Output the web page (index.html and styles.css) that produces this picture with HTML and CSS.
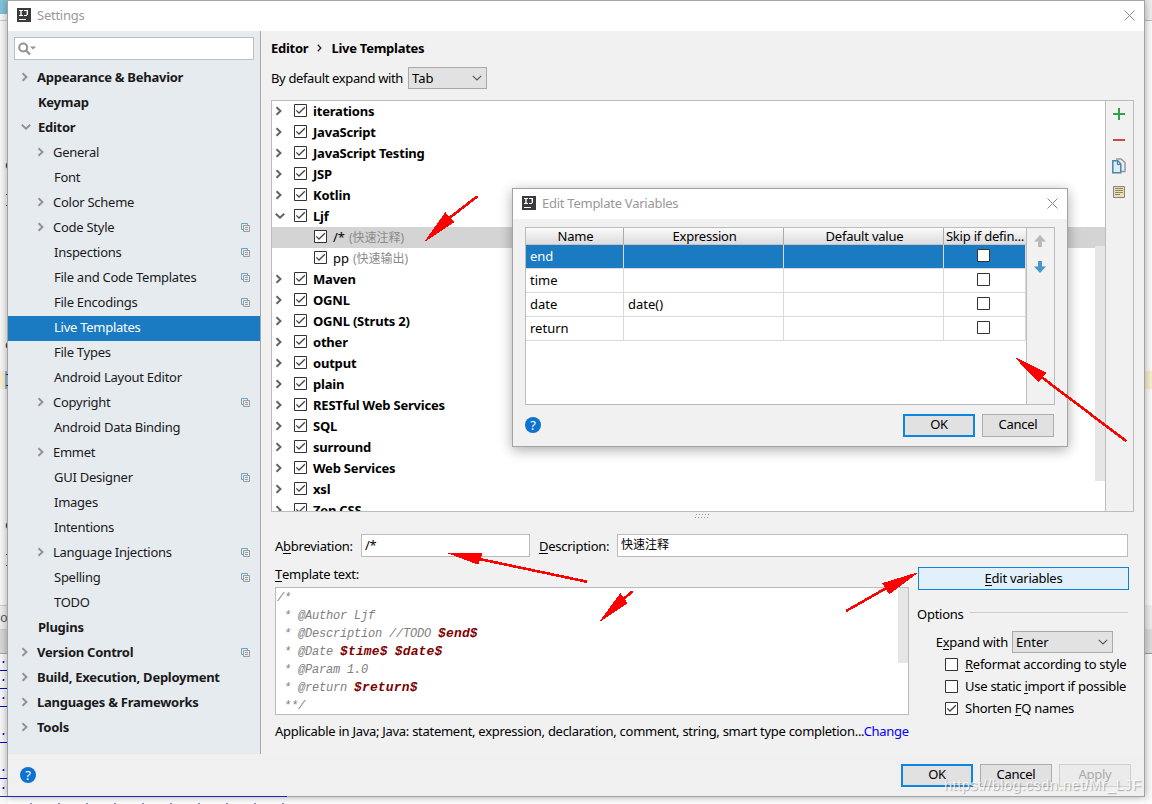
FILE: index.html
```html
<!DOCTYPE html>
<html lang="en">
<head>
<meta charset="utf-8">
<title>Settings</title>
<link rel="stylesheet" href="styles.css">
</head>
<body>
<svg class="defs" width="0" height="0">
  <symbol id="right" viewBox="0 0 8 10"><path d="M1.5 1.2 5.5 5 1.5 8.8" fill="none" stroke="currentColor" stroke-width="1.9"/></symbol>
  <symbol id="down" viewBox="0 0 10 8"><path d="M.8 1.8 5 5.8 9.2 1.8" fill="none" stroke="currentColor" stroke-width="1.9"/></symbol>
  <symbol id="box" viewBox="0 0 13 13"><path d="M.5.5h12v12H.5z" fill="#fff" stroke="#333"/></symbol>
  <symbol id="checked" viewBox="0 0 13 13"><path d="M.5.5h12v12H.5z" fill="#fff" stroke="#333"/><path d="M2.3 6.4 5 9 10.9 3.2" fill="none" stroke="#444" stroke-width="1.3"/></symbol>
  <symbol id="copy" viewBox="0 0 9 9"><path d="M2 6.5H.5v-6h6V2" fill="none" stroke="#6da3c1"/><path d="M2.5 2.5h6v6h-6zM4 4.5h3M4 6.5h3" fill="none" stroke="#9b9b9b"/></symbol>
  <symbol id="close" viewBox="0 0 11 11"><path d="M.5.5l10 10M10.500.5l-10 10" fill="none" stroke="#8a8a8a"/></symbol>
  <symbol id="ij" viewBox="0 0 14 14"><path d="M0 0h14v14H0z" fill="#3b3b3b"/><path d="M2 2.500h4M2 7.500h4M7 2.500h4M7 7.500h3" fill="none" stroke="#fff"/><path d="M4 2v6M10.300 2v5" fill="none" stroke="#fff" stroke-width="1.400"/><path d="M2 11.500h7" stroke="#fff"/></symbol>
  <symbol id="combo" viewBox="0 0 10 6"><path d="M.8.8 5 5 9.200.8" fill="none" stroke="#555" stroke-width="1.100"/></symbol>
</svg>

<div class="behind">
  <div class="left-edge">
    <span class="edge-tab"></span><span class="edge-fade"></span>
    <b class="t1">o</b><b class="t2">}</b><b class="t3">o</b><i class="caret-line"></i><b class="t4">}</b><b class="t5">o</b><b class="t6">}</b>
    <span class="edge-bar">o</span><i class="edge-tool"></i>
    <i class="lk l1">.</i><i class="lk l2">.</i><i class="lk l3">.</i><i class="lk l4">.</i><i class="lk l5">.</i><i class="lk l6">.</i>
  </div>
  <div class="right-edge"><i class="r1"></i><i class="r2"></i><i class="r3"></i></div>
  <div class="under"></div>
</div>

<main class="window settings">
  <header class="titlebar"><svg class="logo"><use href="#ij"/></svg><span>Settings</span><svg class="x"><use href="#close"/></svg></header>
  <div class="body">
    <aside class="sidebar">
      <div class="search"><svg width="19" height="14" viewBox="0 0 19 14"><circle cx="5.200" cy="5.500" r="4" fill="none" stroke="#929292" stroke-width="2"/><path d="M8 8.500l4 4" stroke="#929292" stroke-width="2.300"/><path d="M12 4.500h6l-3 3z" fill="#929292"/></svg></div>
      <ul class="nav">
        <li class="top"><svg class="r"><use href="#right"/></svg>Appearance &amp; Behavior</li>
        <li class="top leaf">Keymap</li>
        <li class="top leaf"><svg class="d"><use href="#down"/></svg>Editor</li>
        <li><svg class="r"><use href="#right"/></svg>General</li>
        <li class="leaf">Font</li>
        <li><svg class="r"><use href="#right"/></svg>Color Scheme</li>
        <li><svg class="r"><use href="#right"/></svg>Code Style<svg class="c"><use href="#copy"/></svg></li>
        <li class="leaf">Inspections<svg class="c"><use href="#copy"/></svg></li>
        <li class="leaf">File and Code Templates<svg class="c"><use href="#copy"/></svg></li>
        <li class="leaf">File Encodings<svg class="c"><use href="#copy"/></svg></li>
        <li class="leaf sel">Live Templates</li>
        <li class="leaf">File Types</li>
        <li class="leaf">Android Layout Editor</li>
        <li><svg class="r"><use href="#right"/></svg>Copyright<svg class="c"><use href="#copy"/></svg></li>
        <li class="leaf">Android Data Binding</li>
        <li><svg class="r"><use href="#right"/></svg>Emmet</li>
        <li class="leaf">GUI Designer<svg class="c"><use href="#copy"/></svg></li>
        <li class="leaf">Images</li>
        <li class="leaf">Intentions</li>
        <li><svg class="r"><use href="#right"/></svg>Language Injections<svg class="c"><use href="#copy"/></svg></li>
        <li class="leaf">Spelling<svg class="c"><use href="#copy"/></svg></li>
        <li class="leaf">TODO</li>
        <li class="top leaf">Plugins</li>
        <li class="top"><svg class="r"><use href="#right"/></svg>Version Control<svg class="c"><use href="#copy"/></svg></li>
        <li class="top"><svg class="r"><use href="#right"/></svg>Build, Execution, Deployment</li>
        <li class="top"><svg class="r"><use href="#right"/></svg>Languages &amp; Frameworks</li>
        <li class="top"><svg class="r"><use href="#right"/></svg>Tools</li>
      </ul>
    </aside>
    <section class="content">
      <h1 class="crumbs"><span>Editor</span><svg width="5" height="8" viewBox="0 0 5 8"><path d="M.8.8 3.800 4 .8 7.200" fill="none" stroke="#222" stroke-width="1.300"/></svg><span>Live Templates</span></h1>
      <div class="expand"><span>By default expand with</span><div class="select tab">Tab<svg><use href="#combo"/></svg></div></div>
      <div class="panel">
        <ul class="tree">
          <li><svg class="r"><use href="#right"/></svg><svg class="k"><use href="#checked"/></svg>iterations</li>
          <li><svg class="r"><use href="#right"/></svg><svg class="k"><use href="#checked"/></svg>JavaScript</li>
          <li><svg class="r"><use href="#right"/></svg><svg class="k"><use href="#checked"/></svg>JavaScript Testing</li>
          <li><svg class="r"><use href="#right"/></svg><svg class="k"><use href="#checked"/></svg>JSP</li>
          <li><svg class="r"><use href="#right"/></svg><svg class="k"><use href="#checked"/></svg>Kotlin</li>
          <li><svg class="d"><use href="#down"/></svg><svg class="k"><use href="#checked"/></svg>Ljf</li>
          <li class="child hot"><svg class="k"><use href="#checked"/></svg>/*<em>(快速注释)</em></li>
          <li class="child"><svg class="k"><use href="#checked"/></svg>pp<em>(快速输出)</em></li>
          <li><svg class="r"><use href="#right"/></svg><svg class="k"><use href="#checked"/></svg>Maven</li>
          <li><svg class="r"><use href="#right"/></svg><svg class="k"><use href="#checked"/></svg>OGNL</li>
          <li><svg class="r"><use href="#right"/></svg><svg class="k"><use href="#checked"/></svg>OGNL (Struts 2)</li>
          <li><svg class="r"><use href="#right"/></svg><svg class="k"><use href="#checked"/></svg>other</li>
          <li><svg class="r"><use href="#right"/></svg><svg class="k"><use href="#checked"/></svg>output</li>
          <li><svg class="r"><use href="#right"/></svg><svg class="k"><use href="#checked"/></svg>plain</li>
          <li><svg class="r"><use href="#right"/></svg><svg class="k"><use href="#checked"/></svg>RESTful Web Services</li>
          <li><svg class="r"><use href="#right"/></svg><svg class="k"><use href="#checked"/></svg>SQL</li>
          <li><svg class="r"><use href="#right"/></svg><svg class="k"><use href="#checked"/></svg>surround</li>
          <li><svg class="r"><use href="#right"/></svg><svg class="k"><use href="#checked"/></svg>Web Services</li>
          <li><svg class="r"><use href="#right"/></svg><svg class="k"><use href="#checked"/></svg>xsl</li>
          <li><svg class="r"><use href="#right"/></svg><svg class="k"><use href="#checked"/></svg>Zen CSS</li>
        </ul>
        <i class="thumb"></i>
        <div class="tools">
          <svg width="14" height="14" viewBox="0 0 14 14"><path d="M7 1v12M1 7h12" stroke="#2ca24a" stroke-width="2"/></svg>
          <svg width="14" height="14" viewBox="0 0 14 14"><path d="M1 7h12" stroke="#ca4b42" stroke-width="2"/></svg>
          <svg width="14" height="16" viewBox="0 0 14 16"><path d="M4 1h5l4 3.500V13.500h-4" fill="#eee" stroke="#9a9a9a" stroke-width="1.500"/><path d="M.8 2.800h5l3 3.200v8.700h-8z" fill="#ddecf3" stroke="#4985ab" stroke-width="1.500"/><path d="M5.500 3v3.500H9" fill="none" stroke="#4985ab" stroke-width="1.200"/></svg>
          <svg width="12" height="12" viewBox="0 0 12 12"><path d="M.5.5h11v11H.5z" fill="#f2dda4" stroke="#858585"/><path d="M2 2.500h8M2 4.500h8M2 6.500h8M2 8.500h5" stroke="#858585"/></svg>
        </div>
      </div>
      <div class="grip"><svg width="15" height="4" viewBox="0 0 15 4"><path d="M0 3.500h15M1 .5h14" stroke="#999" stroke-dasharray="1 2"/></svg></div>
      <div class="fields">
        <label class="abbr">A<u>b</u>breviation:</label><div class="input short">/*</div>
        <label class="desc"><u>D</u>escription:</label><div class="input cjk">快速注释</div>
      </div>
      <div class="lower">
        <div class="template">
          <label><u>T</u>emplate text:</label>
          <div class="editor"><pre>/*
 * @Author Ljf
 * @Description //TODO <b>$end$</b>
 * @Date <b>$time$</b> <b>$date$</b>
 * @Param 1.0
 * @return <b>$return$</b>
 **/</pre><i></i></div>
          <p>Applicable in Java; Java: statement, expression, declaration, comment, string, smart type completion...<a>Change</a></p>
        </div>
        <div class="options">
          <div class="edit-vars"><span><u>E</u>dit variables</span></div>
          <div class="legend"><span>Options</span><i></i></div>
          <div class="with"><span>E<u>x</u>pand with</span><div class="select enter">Enter<svg><use href="#combo"/></svg></div></div>
          <div class="opt"><svg class="k"><use href="#box"/></svg><span><u>R</u>eformat according to style</span></div>
          <div class="opt"><svg class="k"><use href="#box"/></svg><span>Use static <u>i</u>mport if possible</span></div>
          <div class="opt"><svg class="k"><use href="#checked"/></svg><span>Shorten <u>F</u>Q names</span></div>
        </div>
      </div>
    </section>
  </div>
  <footer class="footer"><span class="help">?</span><div class="btn primary">OK</div><div class="btn">Cancel</div><div class="btn off">Apply</div></footer>
</main>

<section class="window dialog">
  <header class="titlebar"><svg class="logo"><use href="#ij"/></svg><span>Edit Template Variables</span><svg class="x"><use href="#close"/></svg></header>
  <div class="vars">
    <div class="grid">
      <div class="row head"><span>Name</span><span>Expression</span><span>Default value</span><span class="skip">Skip if defin...</span></div>
      <div class="row on"><span>end</span><span></span><span></span><span><svg class="k"><use href="#box"/></svg></span></div>
      <div class="row"><span>time</span><span></span><span></span><span><svg class="k"><use href="#box"/></svg></span></div>
      <div class="row"><span>date</span><span>date()</span><span></span><span><svg class="k"><use href="#box"/></svg></span></div>
      <div class="row"><span>return</span><span></span><span></span><span><svg class="k"><use href="#box"/></svg></span></div>
    </div>
    <div class="movers">
      <svg width="12" height="12" viewBox="0 0 12 12"><path d="M6 0l6 6.500H8V12H4V6.500H0z" fill="#b9b9b9"/></svg>
      <svg width="12" height="12" viewBox="0 0 12 12"><path d="M6 12l6-6.500H8V0H4v5.500H0z" fill="#4797c8"/></svg>
    </div>
  </div>
  <footer class="footer"><span class="help">?</span><div class="btn primary">OK</div><div class="btn">Cancel</div></footer>
</section>

<div class="watermark">https://blog.csdn.net/Mr_LJF</div>
<div class="link-line"></div>
<svg class="arrows" viewBox="0 0 1152 804" shape-rendering="crispEdges">
  <g fill="#f00" stroke="#f00" stroke-width="2.600" stroke-linecap="round" transform="translate(-.6 0)">
    <path d="M477 197 450 218"/><path stroke-width="1" d="M426 241 446 213 454 222z"/>
    <path d="M1126 440.500 1042 377"/><path stroke-width="1" d="M1016.500 358 1046.500 373 1039 381.500z"/>
    <path d="M586.500 581.500 480 559"/><path stroke-width="1" d="M449 553 482.500 553.500 478.500 564z"/>
    <path d="M632.500 592 624 599"/><path stroke-width="1" d="M601 621 621 594 627.500 603z"/>
    <path d="M847.500 610.500 887 588"/><path stroke-width="1" d="M917.500 573 883.500 583.500 890 593.500z"/>
  </g>
</svg>
</body>
</html>
```
FILE: styles.css
```css
* { box-sizing: border-box; }
body { margin: 0; width: 1152px; height: 804px; position: relative; overflow: hidden; background: #fff; color: #000; font: 13px "Noto Sans", "Noto Sans CJK SC", sans-serif; letter-spacing: -.26px; }
ul, h1, p, pre { margin: 0; padding: 0; list-style: none; }
svg { flex: none; display: block; }
u { text-decoration: none; border-bottom: 1px solid #000; display: inline-block; line-height: 14px; }
.defs { position: absolute; }

/* windows */
.window { position: absolute; display: flex; flex-direction: column; border: 1px solid #a3a3a3; background: #f1f1f1; }
.settings { left: 7px; top: 0; width: 1138px; height: 797px; box-shadow: 0 0 8px rgba(0,0,0,.35); }
.dialog { left: 512px; top: 188px; width: 556px; height: 259px; box-shadow: 0 3px 12px rgba(0,0,0,.33); }
.titlebar { height: 30px; flex: none; display: flex; align-items: center; padding: 0 9px 2px; background: #fff; color: #999; }
.titlebar span { flex: 1; margin-left: 6px; }
.logo { width: 14px; height: 14px; }
.x { width: 11px; height: 11px; }
.body { flex: 1; min-height: 0; display: flex; }
.r { width: 8px; height: 10px; }
.d { width: 10px; height: 8px; }
.k { width: 13px; height: 13px; }

/* navigation */
.sidebar { width: 253px; background: #e6ebf0; border-right: 1px solid #a7a7a7; color: #1a1a1a; }
.search { height: 23px; margin: 6px; border: 1px solid #bcbfc2; background: #fff; padding: 4px 3px; }
.nav li { height: 25px; padding: 0 10px 3px 29px; display: flex; align-items: center; white-space: nowrap; }
.nav .r { margin-right: 8px; color: #8f9296; }
.nav .d { margin: 0 7px 0 -17px; color: #8f9296; }
.nav .leaf { padding-left: 46px; }
.nav .top { font-weight: 700; padding-left: 13px; }
.nav .top.leaf { padding-left: 30px; }
.nav .c { width: 9px; height: 9px; margin-left: auto; }
.nav .sel { background: #1a7bc3; color: #fff; }

/* content */
.content { flex: 1; min-width: 0; padding: 6px 10px 0; }
.crumbs { height: 21px; display: flex; align-items: center; gap: 9px; font-size: 13px; font-weight: 700; }
.expand { height: 22px; margin-top: 9px; display: flex; align-items: center; }
.expand > span { width: 137px; white-space: nowrap; letter-spacing: -.36px; }
.select { display: flex; align-items: center; justify-content: space-between; border: 1px solid #a9a9a9; background: #e2e2e2; height: 22px; padding: 0 4px 0 3px; letter-spacing: 0; }
.select svg { width: 10px; height: 6px; }
.tab { width: 79px; }
.enter { width: 101px; }
.panel { margin-top: 11px; height: 412px; border: 1px solid #bcbcbc; background: #fff; display: flex; position: relative; }
.tree { flex: 1; overflow: hidden; letter-spacing: -.2px; }
.tree li { height: 21px; padding: 0 0 1px 3px; display: flex; align-items: center; font-weight: 700; white-space: nowrap; }
.tree .r { margin-right: 11px; color: #606060; }
.tree .d { margin: 0 9px 0 0; color: #606060; }
.tree .k { margin-right: 6px; margin-top: -1px; }
.tree .child { padding-left: 42px; font-weight: 400; letter-spacing: 0; }
.tree .hot { background: #d4d4d4; }
.tree em { font-style: normal; font-size: 12px; color: #8b8b8b; margin-left: 4px; }
.thumb { position: absolute; left: 823px; top: 145px; width: 10px; height: 235px; background: #e6e6e6; }
.tools { width: 28px; border-left: 1px solid #bcbcbc; background: #f1f1f1; padding: 6px 1px 0 0; display: flex; flex-direction: column; align-items: center; gap: 12px; }
.tools svg:nth-child(3) { margin: -1px 0; }
.tools svg:nth-child(4) { margin-top: 1px; }
.grip { height: 22px; padding-top: 2px; display: flex; justify-content: center; }
.fields { display: flex; align-items: center; height: 23px; padding: 0 6px 0 4px; }
.abbr { width: 86px; }
.desc { width: 78px; margin-left: 9px; }
.input { flex: 1; height: 23px; line-height: 20px; border: 1px solid #bcbcbc; background: #fff; padding-left: 3px; }
.input.short { flex: none; width: 169px; }
.input.cjk { font-size: 12px; letter-spacing: 0; }
.lower { display: flex; padding: 0 5px 0 4px; gap: 8px; }
.template { width: 634px; flex: none; }
.template label { display: block; height: 30px; padding-top: 8px; }
.editor { height: 128px; border: 1px solid #bcbcbc; background: #fff; display: flex; justify-content: space-between; padding-left: 1px; }
.editor pre { font: italic 12px/18px "Liberation Mono", monospace; letter-spacing: -.2px; color: #808080; padding-top: 1px; }
.editor b { color: #800000; font-size: 13px; line-height: 16px; letter-spacing: .15px; }
.editor i { width: 10px; height: 75px; background: #e6e6e6; }
.template p { margin-top: 7px; white-space: nowrap; letter-spacing: -.285px; }
.template a { color: #00f; }
.options { width: 212px; flex: none; padding-top: 10px; }
.edit-vars { height: 23px; margin-left: 1px; border: 1px solid #0d82db; background: #e1f0fa; display: flex; justify-content: center; padding-top: 1px; }
.legend { display: flex; align-items: center; gap: 6px; margin-top: 14px; height: 20px; }
.legend i { flex: 1; height: 1px; margin: -3px 1px 0 0; background: #cdcdcd; }
.with { display: flex; align-items: center; justify-content: flex-end; gap: 4px; margin: 7px 16px 0 0; }
.opt { display: flex; align-items: center; height: 22px; padding-left: 28px; gap: 7px; white-space: nowrap; }
.footer { flex: none; height: 42px; display: flex; align-items: center; gap: 7px; padding: 0 13px 0 12px; background: #f0f0f0; }
.help { width: 16px; height: 16px; border-radius: 50%; background: #0d72d0; color: #fff; text-align: center; line-height: 16px; margin-right: auto; font-size: 13px; }
.btn { width: 72px; height: 23px; border: 1px solid #adadad; background: #e1e1e1; text-align: center; line-height: 19px; }
.primary { border: 2px solid #0f85df; line-height: 17px; }
.off { border-color: #cfcfcf; background: #ebebeb; color: #aaa; }

/* variables dialog */
.vars { height: 178px; flex: none; margin: 8px 12px 0; border: 1px solid #bcbcbc; background: #fff; display: flex; }
.grid { width: 500px; letter-spacing: 0; }
.row { display: grid; grid-template-columns: 98px 160px 160px 82px; height: 24px; line-height: 22px; }
.row span { border-right: 1px solid #d9d9d9; border-bottom: 1px solid #d9d9d9; padding-left: 4px; height: 24px; overflow: hidden; white-space: nowrap; }
.row .k { margin: 4px auto 0 29px; }
.row.head { height: 17px; line-height: 17px; background: linear-gradient(#fbfbfb, #dcdcdc); border-bottom: 1px solid #c4c4c4; letter-spacing: -.22px; }
.row.head span { height: 16px; padding: 0 0 0 2px; text-align: center; border-bottom: 0; border-color: #aaa; }
.row.head span:last-child { border: 0; padding: 0; }
.row.on span { background: #1a7bc3; color: #fff; }
.movers { flex: 1; border-left: 1px solid #bcbcbc; background: #f1f1f1; padding: 7px 2px 0 0; display: flex; flex-direction: column; align-items: center; gap: 14px; }
.dialog .footer { height: 40px; background: #f1f1f1; }

/* content peeking out around the window */
.left-edge { position: absolute; left: 0; top: 0; width: 8px; height: 804px; overflow: hidden; background: #f8f8f8; font: 13px "Liberation Mono", monospace; }
.left-edge > * { position: absolute; left: 0; }
.left-edge b { left: 5px; font-weight: 400; color: #224; }
.edge-tab { top: 0; width: 8px; height: 14px; background: #7fc4dc; }
.edge-fade { top: 20px; width: 8px; height: 1px; background: #ccc; }
.t1 { top: 158px; } .t2 { top: 192px; } .t3 { top: 338px; } .t4 { top: 372px; z-index: 1; } .t5 { top: 518px; } .t6 { top: 552px; }
.caret-line { top: 371px; width: 8px; height: 18px; background: linear-gradient(90deg, #faf1d1 60%, #8fb9e8 60%); }
.edge-bar { top: 605px; width: 8px; height: 25px; line-height: 25px; background: #eee; border-block: 1px solid #ccc; color: #555; }
.edge-tool { top: 630px; width: 8px; height: 24px; background: #d8d8d8; border-bottom: 1px solid #aaa; }
.lk { width: 8px; height: 16px; line-height: 10px; border-bottom: 1px solid #00d; color: #00d; }
.l1 { top: 655px; } .l2 { top: 673px; } .l3 { top: 691px; } .l4 { top: 727px; } .l5 { top: 763px; } .l6 { top: 781px; }
.right-edge { position: absolute; left: 1144px; top: 0; width: 8px; height: 804px; background: #fbfbfb; }
.right-edge i { position: absolute; left: 0; width: 8px; }
.r1 { top: 0; height: 21px; background: #eee; border-bottom: 1px solid #bbb; }
.r2 { top: 371px; height: 18px; background: #f8f0cd; }
.r3 { top: 605px; height: 49px; background: linear-gradient(#eee 50%, #ddd 50%); border-bottom: 1px solid #999; }
.under { position: absolute; left: 30px; top: 803px; width: 270px; height: 1px; background: repeating-linear-gradient(90deg, #88c 0 2px, transparent 2px 28px); }
.link-line { position: absolute; left: 0; top: 796px; width: 287px; height: 1px; background: #2525ad; }
.watermark { position: absolute; left: 944px; top: 776px; font: 14.500px/18px "Liberation Sans", sans-serif; letter-spacing: .52px; color: rgba(255,255,255,.8); text-shadow: 1px 1px 1px rgba(100,100,100,.5); }
.arrows { position: absolute; left: 0; top: 0; width: 1152px; height: 804px; pointer-events: none; }
```
